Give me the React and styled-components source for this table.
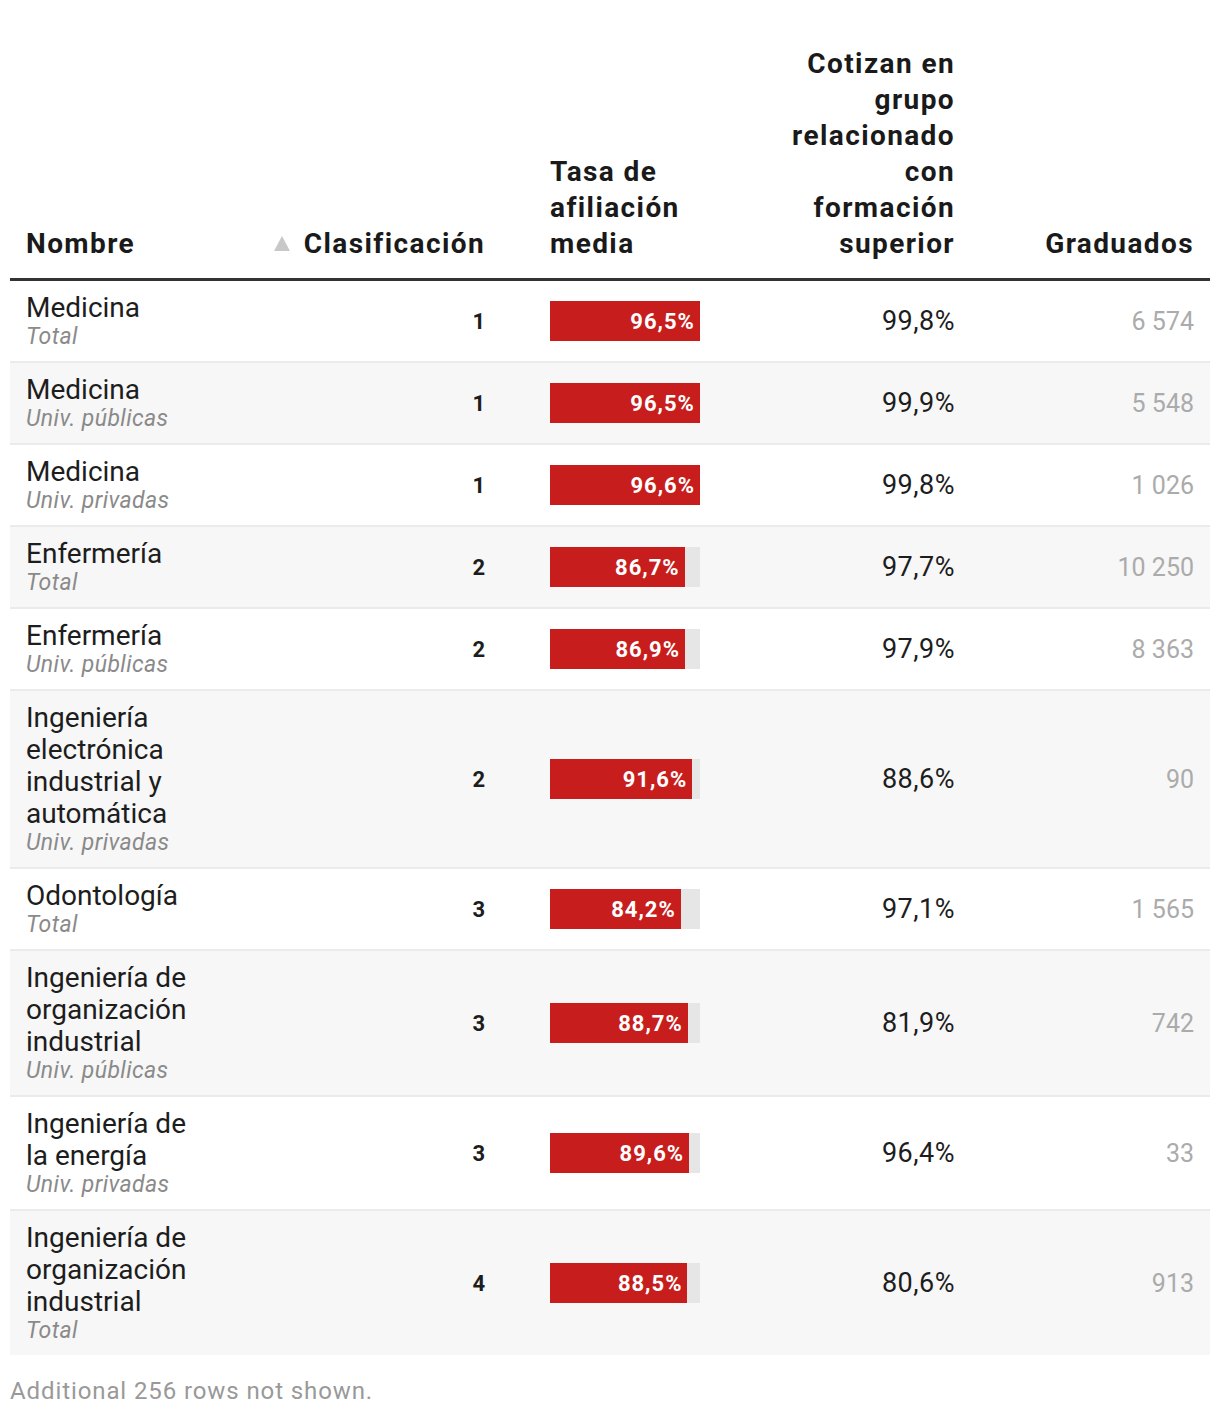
import React from "react";
import styled, { createGlobalStyle } from "styled-components";

const GlobalStyle = createGlobalStyle`
  body {
    margin: 0;
    background: #ffffff;
    font-family: Roboto, "Liberation Sans", sans-serif;
    color: #1d1d1d;
  }
`;

const rows = [
  { name: "Medicina", group: "Total", rank: 1, rate: 96.5, related: "99,8%", grads: "6 574" },
  { name: "Medicina", group: "Univ. públicas", rank: 1, rate: 96.5, related: "99,9%", grads: "5 548" },
  { name: "Medicina", group: "Univ. privadas", rank: 1, rate: 96.6, related: "99,8%", grads: "1 026" },
  { name: "Enfermería", group: "Total", rank: 2, rate: 86.7, related: "97,7%", grads: "10 250" },
  { name: "Enfermería", group: "Univ. públicas", rank: 2, rate: 86.9, related: "97,9%", grads: "8 363" },
  { name: "Ingeniería electrónica industrial y automática", group: "Univ. privadas", rank: 2, rate: 91.6, related: "88,6%", grads: "90" },
  { name: "Odontología", group: "Total", rank: 3, rate: 84.2, related: "97,1%", grads: "1 565" },
  { name: "Ingeniería de organización industrial", group: "Univ. públicas", rank: 3, rate: 88.7, related: "81,9%", grads: "742" },
  { name: "Ingeniería de la energía", group: "Univ. privadas", rank: 3, rate: 89.6, related: "96,4%", grads: "33" },
  { name: "Ingeniería de organización industrial", group: "Total", rank: 4, rate: 88.5, related: "80,6%", grads: "913" },
];

const MAX_RATE = 96.6;

const fmt = (v) => v.toFixed(1).replace(".", ",") + "%";

const Page = styled.div`
  padding: 10px;
`;

const Table = styled.div`
  width: 1200px;
`;

const Row = styled.div`
  display: grid;
  grid-template-columns: 210px 281px 263px 207px 239px;
  align-items: center;
  padding: 11px 0;
  background: ${(p) => (p.$alt ? "#f7f7f7" : "#ffffff")};
  border-bottom: ${(p) => (p.$last ? "none" : "2px solid #ebebeb")};
`;

const HeadRow = styled(Row)`
  align-items: end;
  padding: 36px 0 16px;
  background: #ffffff;
  border-bottom: 3px solid #333333;
`;

const Cell = styled.div`
  padding: 0 16px 0 ${(p) => (p.$wide ? "49px" : "16px")};
  text-align: ${(p) => (p.$right ? "right" : "left")};
`;

const HeadCell = styled(Cell)`
  font-size: 28px;
  font-weight: 700;
  line-height: 36px;
  letter-spacing: 1.4px;
  color: #1a1a1a;
  display: ${(p) => (p.$sort ? "flex" : "block")};
  justify-content: flex-end;
  align-items: center;
  gap: 14px;
`;

const SortMark = styled.span`
  width: 0;
  height: 0;
  border-left: 8px solid transparent;
  border-right: 8px solid transparent;
  border-bottom: 15px solid #c8c8c8;
  margin-bottom: 2px;
`;

const Name = styled.div`
  font-size: 28px;
  line-height: 32px;
  color: #1d1d1d;
`;

const Group = styled.div`
  font-size: 23px;
  line-height: 26px;
  letter-spacing: 0.4px;
  font-style: italic;
  color: #8a8a8a;
`;

const Rank = styled(Cell)`
  font-size: 22px;
  font-weight: 700;
  color: #1d1d1d;
`;

const Track = styled.div`
  width: 150px;
  height: 40px;
  background: #e6e6e6;
`;

const Fill = styled.div`
  height: 100%;
  background: #c71e1d;
  display: flex;
  align-items: center;
  justify-content: flex-end;
  padding-right: 5px;
  box-sizing: border-box;
  color: #ffffff;
  font-size: 22px;
  font-weight: 700;
  letter-spacing: 1px;
  white-space: nowrap;
`;

const Value = styled(Cell)`
  font-size: ${(p) => (p.$muted ? "25px" : "27px")};
  letter-spacing: ${(p) => (p.$muted ? "0" : "0.5px")};
  color: ${(p) => (p.$muted ? "#ababab" : "#1d1d1d")};
`;

const Note = styled.div`
  margin-top: 22px;
  font-size: 24px;
  letter-spacing: 0.9px;
  color: #999999;
`;

export default function App() {
  return (
    <Page>
      <GlobalStyle />
      <Table>
        <HeadRow>
          <HeadCell>Nombre</HeadCell>
          <HeadCell $right $sort>
            <SortMark />
            Clasificación
          </HeadCell>
          <HeadCell $wide>Tasa de afiliación media</HeadCell>
          <HeadCell $right>Cotizan en grupo relacionado con formación superior</HeadCell>
          <HeadCell $right>Graduados</HeadCell>
        </HeadRow>
        {rows.map((r, i) => (
          <Row key={i} $alt={i % 2 === 1} $last={i === rows.length - 1}>
            <Cell>
              <Name>{r.name}</Name>
              <Group>{r.group}</Group>
            </Cell>
            <Rank $right>{r.rank}</Rank>
            <Cell $wide>
              <Track>
                <Fill style={{ width: `${(r.rate / MAX_RATE) * 100}%` }}>{fmt(r.rate)}</Fill>
              </Track>
            </Cell>
            <Value $right>{r.related}</Value>
            <Value $right $muted>{r.grads}</Value>
          </Row>
        ))}
      </Table>
      <Note>Additional 256 rows not shown.</Note>
    </Page>
  );
}
